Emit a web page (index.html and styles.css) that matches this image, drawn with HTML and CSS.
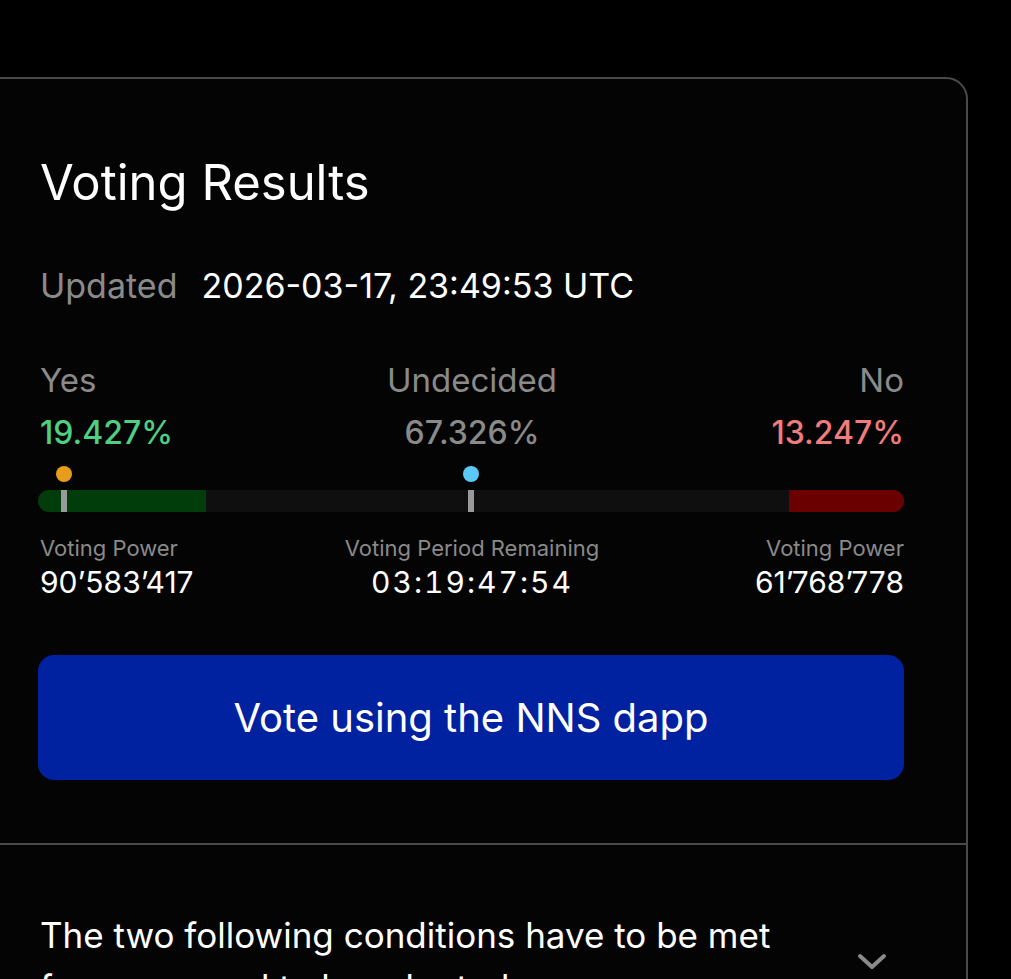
FILE: index.html
```html
<!DOCTYPE html>
<html lang="en">
<head>
  <meta charset="UTF-8">
  <meta name="viewport" content="width=device-width, initial-scale=1.0">
  <title>Voting Results</title>
  <link rel="stylesheet" href="styles.css">
</head>
<body>

  <!-- Voting card -->
  <section class="card">
    <div class="card-body">
      <h2 class="title">Voting Results</h2>

      <p class="updated">
        <span class="muted">Updated</span>
        <span>2026-03-17, 23:49:53 UTC</span>
      </p>

      <div class="tally">
        <div class="side">
          <span class="side-label">Yes</span>
          <span class="pct yes">19.427%</span>
        </div>
        <div class="side center">
          <span class="side-label">Undecided</span>
          <span class="pct undecided">67.326%</span>
        </div>
        <div class="side right">
          <span class="side-label">No</span>
          <span class="pct no">13.247%</span>
        </div>
      </div>

      <!-- Progress bar with thresholds -->
      <div class="meter">
        <span class="dot orange" style="left: 3%"></span>
        <span class="dot blue" style="left: 50%"></span>
        <div class="track">
          <div class="fill-yes" style="width: 19.427%"></div>
          <div class="fill-no" style="width: 13.247%"></div>
          <span class="tick" style="left: 3%"></span>
          <span class="tick" style="left: 50%"></span>
        </div>
      </div>

      <div class="stats">
        <div class="stat">
          <span class="stat-label">Voting Power</span>
          <span class="stat-value">90’583’417</span>
        </div>
        <div class="stat center">
          <span class="stat-label">Voting Period Remaining</span>
          <span class="stat-value timer">03:19:47:54</span>
        </div>
        <div class="stat right">
          <span class="stat-label">Voting Power</span>
          <span class="stat-value">61’768’778</span>
        </div>
      </div>

      <button class="vote-btn">Vote using the NNS dapp</button>
    </div>

    <!-- Conditions -->
    <div class="conditions">
      <p class="conditions-text">The two following conditions have to be met for a proposal to be adopted:</p>
      <svg class="chevron" width="32" height="20" viewBox="0 0 32 20">
        <path d="M4 5 L16 16 L28 5" fill="none" stroke="#8a8a8a" stroke-width="4" stroke-linecap="round" stroke-linejoin="round"/>
      </svg>
    </div>
  </section>

</body>
</html>
```

FILE: styles.css
```css
/* General Reset */
* {
  margin: 0;
  padding: 0;
  box-sizing: border-box;
}

body {
  font-family: Inter, "Noto Sans", Arial, sans-serif;
  background-color: #000000;
  color: #ffffff;
  overflow: hidden;
}

.card {
  margin: 77px 0 0 -30px;
  width: 998px;
  background-color: #040404;
  border: 2px solid #4a4a4a;
  border-radius: 22px;
}

.card-body {
  padding: 76px 62px 63px 68px;
}

.title {
  font-size: 49px;
  font-weight: 400;
  line-height: 56px;
}

.updated {
  margin-top: 54px;
  font-size: 34px;
  line-height: 42px;
  display: flex;
  gap: 24px;
}

.muted {
  color: #8a8a8a;
}

/* Yes / Undecided / No */
.tally {
  margin-top: 53px;
  display: grid;
  grid-template-columns: 1fr 1fr 1fr;
}

.side {
  display: flex;
  flex-direction: column;
  gap: 13px;
}

.center {
  align-items: center;
  text-align: center;
}

.right {
  align-items: flex-end;
  text-align: right;
}

.side-label {
  font-size: 33px;
  line-height: 40px;
  color: #8a8a8a;
}

.pct {
  font-size: 32px;
  line-height: 40px;
  font-weight: 500;
}

.yes {
  color: #4fcf82;
}

.undecided {
  color: #8a8a8a;
}

.no {
  color: #f07c7c;
}

/* Meter */
.meter {
  position: relative;
  margin: 13px 0 0 -2px;
  padding-top: 24px;
}

.dot {
  position: absolute;
  top: 0;
  width: 16px;
  height: 16px;
  margin-left: -8px;
  border-radius: 50%;
}

.orange {
  background-color: #e89c1c;
}

.blue {
  background-color: #5cc8f7;
}

.track {
  position: relative;
  height: 22px;
  background-color: #0f0f0f;
  border-radius: 11px;
  overflow: hidden;
  display: flex;
  justify-content: space-between;
}

.fill-yes {
  background-color: #003d0a;
}

.fill-no {
  background-color: #6b0000;
}

.tick {
  position: absolute;
  top: 0;
  width: 6px;
  height: 22px;
  margin-left: -3px;
  background-color: #9a9a9a;
}

/* Stats row */
.stats {
  margin-top: 22px;
  display: grid;
  grid-template-columns: 1fr 1.3fr 1fr;
}

.stat {
  display: flex;
  flex-direction: column;
  gap: 2px;
}

.stat-label {
  font-size: 22px;
  line-height: 28px;
  color: #8a8a8a;
}

.stat-value {
  font-size: 30px;
  line-height: 36px;
}

.timer {
  letter-spacing: 2px;
  font-variant-numeric: tabular-nums;
}

.vote-btn {
  margin-top: 55px;
  width: calc(100% + 2px);
  margin-left: -2px;
  height: 125px;
  border: none;
  border-radius: 16px;
  background-color: #0021a0;
  color: #ffffff;
  font-family: inherit;
  font-size: 40px;
  cursor: pointer;
}

/* Conditions section */
.conditions {
  border-top: 2px solid #4a4a4a;
  padding: 64px 78px 40px 68px;
  display: flex;
  align-items: center;
  justify-content: space-between;
}

.conditions-text {
  max-width: 780px;
  font-size: 35px;
  line-height: 52px;
}

.chevron {
  flex-shrink: 0;
}
```
